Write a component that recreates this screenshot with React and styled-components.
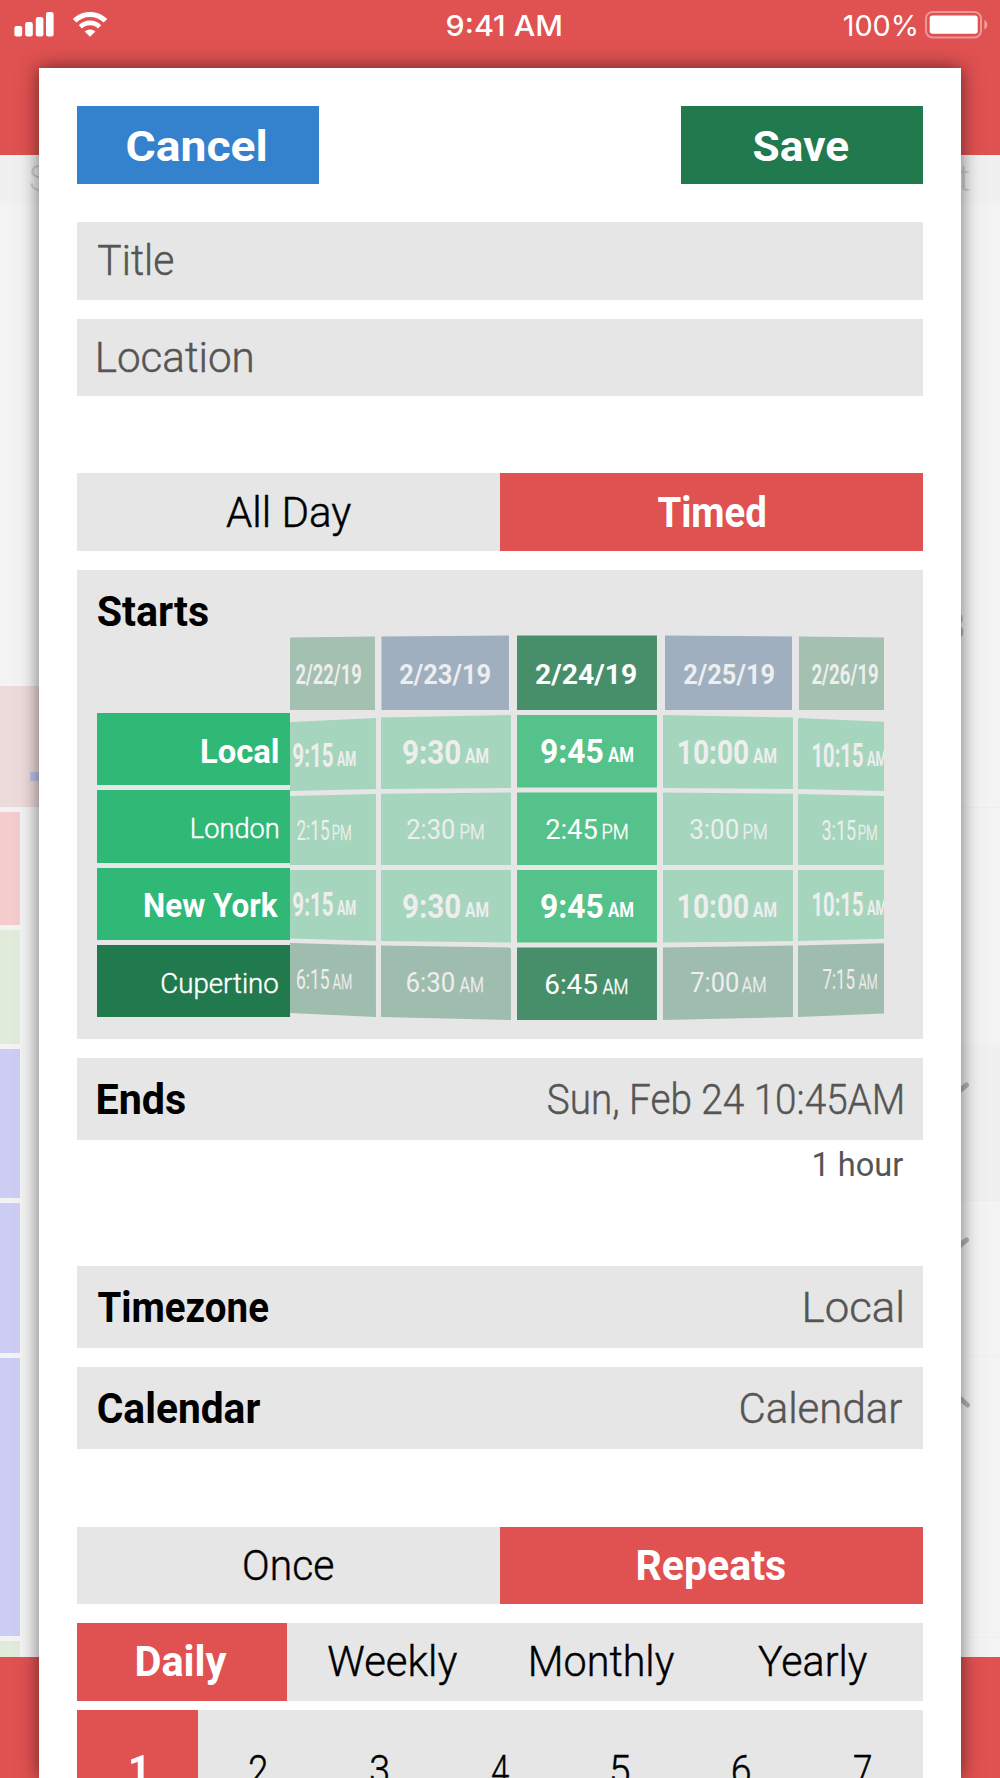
import React, { useLayoutEffect, useRef, useState } from "react";
import styled, { createGlobalStyle } from "styled-components";

const red = "#e05151";
const grey = "#e6e6e6";
const green = "#2fb876";
const darkGreen = "#207a4e";

const GlobalStyle = createGlobalStyle`
  * {
    box-sizing: border-box;
  }
  body {
    margin: 0;
    overflow: hidden;
    font-family: Roboto, "Liberation Sans", sans-serif;
    font-size: 42px;
    font-weight: 300;
  }
`;

const Screen = styled.div`
  position: relative;
  display: flex;
  flex-direction: column;
  width: 1000px;
  height: 1778px;
  overflow: hidden;
  background: #f3f3f3;
`;

/* status bar */

const Header = styled.header`
  height: 154.5px;
  flex: none;
  background: ${red};
`;

const StatusBar = styled.div`
  display: grid;
  grid-template-columns: 1fr auto 1fr;
  align-items: center;
  height: 51px;
  padding: 0 12px 0 14px;
  color: #fff;
  font-family: Inter, "Liberation Sans", sans-serif;
  font-size: 29px;
  font-weight: 500;
`;

const Clock = styled.div`
  padding-left: 6px;
`;

const StatusGroup = styled.div`
  display: flex;
  align-items: center;
  justify-content: ${(props) => (props.$end ? "flex-end" : "flex-start")};
  gap: ${(props) => (props.$end ? "9px" : "19px")};
  font-size: 28.5px;
  font-weight: 400;

  svg {
    display: block;
    margin-bottom: 2px;
  }
`;

/* calendar behind the sheet */

const WeekBar = styled.div`
  display: flex;
  justify-content: space-between;
  height: 48px;
  flex: none;
  padding: 0 30px 0 29px;
  background: #f0f0f0;
  color: #cfcfcf;
  font-size: 36px;
  line-height: 48px;
`;

const Days = styled.div`
  display: flex;
  flex: 1;
  min-height: 0;
`;

const EventColumn = styled.div`
  display: flex;
  flex-direction: column;
  gap: 5px;
  width: 50%;
  padding-top: 483px;
`;

const TodayBand = styled.div`
  display: flex;
  align-items: flex-end;
  height: 121px;
  flex: none;
  padding: 0 0 26px 30px;
  background: #eddada;
`;

const TodayMark = styled.span`
  width: 40px;
  height: 9px;
  background: #c3c4ea;
`;

const EventBlock = styled.div`
  width: 19.5px;
  height: ${(props) => props.$height}px;
  flex: none;
  background: ${(props) => props.$color};
`;

const DayColumn = styled.div`
  display: flex;
  flex-direction: column;
  width: 50%;
`;

const DayRow = styled.div`
  display: flex;
  justify-content: flex-end;
  height: ${(props) => props.$height}px;
  flex: none;
  padding: ${(props) => props.$top || 0}px ${(props) => props.$right || 30}px 0 0;
  border-bottom: 1px solid #eee;
  background: ${(props) => (props.$shaded ? "#f0f0f0" : "transparent")};
  color: #b8b8b8;
  font-size: 41px;
  font-weight: 700;
  line-height: 48px;
`;

const TabBar = styled.footer`
  height: 121px;
  flex: none;
  background: ${red};
`;

/* sheet */

const Sheet = styled.main`
  position: absolute;
  top: 67.7px;
  left: 38.7px;
  display: flex;
  flex-direction: column;
  width: 922.7px;
  height: 1710.3px;
  padding: 38.6px 38.6px 0;
  overflow: hidden;
  background: #fff;
  box-shadow: 0 0 18px rgba(0, 0, 0, 0.55);
`;

const Actions = styled.div`
  display: flex;
  justify-content: space-between;
  margin-bottom: 38.7px;
`;

const ActionButton = styled.button`
  display: flex;
  align-items: center;
  width: 241.7px;
  height: 77.3px;
  padding: 4px 0 0 ${(props) => props.$left}px;
  border: none;
  background: ${(props) => props.$color};
  color: #fff;
  font: inherit;
  font-weight: 700;
`;

const Field = styled.div`
  display: flex;
  align-items: center;
  justify-content: space-between;
  height: ${(props) => props.$height || 77.3}px;
  flex: none;
  margin-bottom: ${(props) => (props.$gap ?? 19.3)}px;
  padding: 0 20.5px;
  background: ${grey};
  color: #555;
`;

const FieldLabel = styled.span`
  color: #000;
  font-weight: 700;
`;

const Duration = styled.div`
  display: flex;
  align-items: center;
  justify-content: flex-end;
  height: 50px;
  flex: none;
  margin-bottom: 76px;
  padding-right: 20px;
  color: #555;
  font-size: 32.5px;
  font-weight: 400;
`;

const Segments = styled.div`
  display: flex;
  height: ${(props) => props.$height || 77.3}px;
  flex: none;
  margin-bottom: ${(props) => props.$gap ?? 19.3}px;
  background: ${grey};
`;

const Segment = styled.button`
  display: flex;
  align-items: center;
  justify-content: center;
  flex: ${(props) => (props.$width ? `0 0 ${props.$width}px` : 1)};
  padding: 0;
  border: none;
  background: ${(props) => (props.$active ? red : "transparent")};
  color: ${(props) => (props.$active ? "#fff" : "#000")};
  font: inherit;
  font-weight: ${(props) => (props.$active ? 700 : 300)};
`;

const StartsPanel = styled.section`
  height: 468.7px;
  flex: none;
  margin-bottom: 19.3px;
  padding: 16px 0 0 19.7px;
  background: ${grey};
`;

const StartsTitle = styled.div`
  display: flex;
  align-items: center;
  height: 49px;
  padding: 2px 0 0 1px;
  font-weight: 700;
`;

const Picker = styled.div`
  display: flex;
`;

const Zones = styled.div`
  display: flex;
  flex-direction: column;
  gap: 5px;
  width: 193px;
  padding-top: 78px;
`;

const Zone = styled.div`
  display: flex;
  align-items: center;
  justify-content: flex-end;
  height: 72.3px;
  padding: 4px 12px 0 0;
  background: ${(props) => (props.$dark ? darkGreen : green)};
  color: #fff;
  font-size: ${(props) => (props.$bold ? 33 : 28.5)}px;
  font-weight: ${(props) => (props.$bold ? 700 : 300)};
`;

const Wheel = styled.div`
  display: flex;
  width: 594px;
  height: 400px;
  overflow: hidden;
`;

const WheelColumn = styled.div`
  display: flex;
  flex-direction: column;
  gap: 5px;
  width: ${(props) => props.$width}px;
  flex: none;
  margin-right: ${(props) => props.$gap}px;
  color: ${(props) => (props.$center ? "#fff" : "#eee")};
`;

/* the wheel bends away from the centre, so each cell face is a quad */
const WheelCell = styled.div`
  position: relative;
  display: flex;
  align-items: center;
  height: ${(props) => (props.$head ? 75 : 72.5)}px;
  flex: none;
  padding-left: ${(props) => props.$left}px;
  padding-top: ${(props) => Math.max(0, props.$shift) * 2}px;
  padding-bottom: ${(props) => Math.max(0, -props.$shift) * 2}px;
  font-size: ${(props) => (props.$bold ? 33 : 28.5)}px;
  font-weight: ${(props) => (props.$bold ? 700 : 400)};
  ${(props) => props.$head && "font-size: 28.5px; font-weight: 700;"}

  &::before {
    content: "";
    position: absolute;
    inset: -8px ${(props) => props.$inset[1]}px -8px ${(props) => props.$inset[0]}px;
    background: ${(props) => props.$color};
    clip-path: polygon(
      0 ${(props) => 8 + props.$quad[0]}px,
      100% ${(props) => 8 + props.$quad[1]}px,
      100% calc(100% - 8px + ${(props) => props.$quad[3]}px),
      0 calc(100% - 8px + ${(props) => props.$quad[2]}px)
    );
  }
`;

const CellText = styled.span`
  position: relative;
  display: flex;
`;

const Meridiem = styled.span`
  position: relative;
  margin-left: ${(props) => props.$gap}px;
  padding-top: ${(props) => (props.$bold ? 8 : 6)}px;
  font-size: 19.5px;
  font-weight: ${(props) => (props.$bold ? 700 : 300)};
`;

const FitBox = styled.span`
  display: block;
  white-space: nowrap;
`;

const FitInner = styled.span`
  display: block;
  width: max-content;
  transform-origin: 0 50%;
  -webkit-text-stroke: ${(props) => (props.$light ? "0.45px currentColor" : "0")};
`;

/* condenses or widens the text so that its ink fills the given width */
const Fit = ({ width, children }) => {
  const ref = useRef(null);
  const [transform, setTransform] = useState("none");
  const [light, setLight] = useState(false);

  useLayoutEffect(() => {
    const css = getComputedStyle(ref.current);
    const ctx = document.createElement("canvas").getContext("2d");
    // measured at ten times the size, since the bounds are whole pixels
    const size = parseFloat(css.fontSize);
    ctx.font = `${css.fontWeight} ${size * 10}px ${css.fontFamily}`;
    const m = ctx.measureText(children);
    const left = m.actualBoundingBoxLeft / 10;
    const scale = width / (m.actualBoundingBoxRight / 10 + left);
    setTransform(`translateX(${left * scale}px) scaleX(${scale})`);
    setLight(css.fontWeight === "300");
  }, [width, children]);

  return (
    <FitBox style={{ width }}>
      <FitInner ref={ref} $light={light} style={{ transform }}>
        {children}
      </FitInner>
    </FitBox>
  );
};

const SignalIcon = () => (
  <svg width="40" height="25" viewBox="0 0 40 25" fill="#fff">
    <rect x="0.4" y="14" width="7.8" height="10.5" rx="2.2" />
    <rect x="11.2" y="10" width="7.6" height="14.5" rx="2.2" />
    <rect x="21.8" y="5" width="7.6" height="19.5" rx="2.2" />
    <rect x="32" y="0" width="7.6" height="24.5" rx="2.2" />
  </svg>
);

const WifiIcon = () => (
  <svg width="34" height="25" viewBox="0 0 34 25" fill="none">
    <path d="M1.6 8.8a21.8 21.8 0 0 1 30.8 0" stroke="#fff" strokeWidth="5" />
    <path d="M7.4 14.8a13.8 13.8 0 0 1 19.2 0" stroke="#fff" strokeWidth="4.6" />
    <path d="M11.6 19.6a8 8 0 0 1 10.8 0L17 24.8z" fill="#fff" />
  </svg>
);

const BatteryIcon = () => (
  <svg width="63" height="28" viewBox="0 0 63 28">
    <rect
      x="1"
      y="1"
      width="55"
      height="25.4"
      rx="6.5"
      fill="none"
      stroke="#fff"
      strokeOpacity="0.4"
      strokeWidth="2"
    />
    <rect x="4.7" y="4.4" width="48" height="18.4" rx="2.8" fill="#fff" />
    <path d="M59.4 9c3.8 1.6 3.8 7.8 0 9.4z" fill="#fff" fillOpacity="0.45" />
  </svg>
);

const Chevron = ({ flip }) => (
  <svg width="24" height="24" viewBox="0 0 24 24" fill="none">
    <path
      d={flip ? "M6 5L20.5 18" : "M6 18L20.5 6"}
      stroke="#b4b4b4"
      strokeWidth="5"
      strokeLinecap="round"
    />
  </svg>
);

const events = [
  { height: 113, color: "#f4cccd" },
  { height: 114, color: "#e1ebdc" },
  { height: 149.5, color: "#cdcdf3" },
  { height: 150, color: "#cdcdf3" },
  { height: 277.5, color: "#cdcdf3" },
  { height: 18, color: "#e1ebdc" },
];

const zones = [
  { name: "Local", width: 75.5, bold: true },
  { name: "London", width: 86 },
  { name: "New York", width: 133, bold: true },
  { name: "Cupertino", width: 116, dark: true },
];

const faded = "#a5d6bd";
const fadedDark = "#9fbdae";
const flat = [0, 0, 0, 0];

// cell: [text, text width, left, am/pm width, am/pm gap]
const columns = [
  {
    width: 86,
    gap: 5,
    inset: [0, 1],
    color: faded,
    dark: fadedDark,
    head: ["2/22/19", 65, 6, "#a4c0b1"],
    shifts: [4, 1.5, -1.5, -4],
    quads: [[2.5, 1.5, 0, 0], [7, 3, 3.5, 1.5], [3.5, 1.5, 0, 0], [0, 0, -4, -1.5], [-4.5, -2, -7, -3]],
    cells: [
      ["9:15", 40, 3, 18.5, 4],
      ["2:15", 32, 7, 17.5, 4.5],
      ["9:15", 40, 3, 18.5, 4],
      ["6:15", 32, 7, 18, 4.5],
    ],
  },
  {
    width: 130,
    gap: 6,
    inset: [0.5, 2],
    color: faded,
    dark: fadedDark,
    head: ["2/23/19", 90, 19, "#9fafc0"],
    shifts: [1.5, 0.5, 0, -1],
    quads: [[1.5, 0.5, 0, 0], [2.5, 0, 1.5, 0.5], [1.2, 0, 0, 0], [0, 0, -1.5, 0], [-2, 0, -3, 0]],
    cells: [
      ["9:30", 57, 22, 23, 5.5],
      ["2:30", 47, 26.5, 22, 6.5],
      ["9:30", 57, 22, 23, 5.5],
      ["6:30", 47, 26.5, 22.5, 6],
    ],
  },
  {
    width: 140,
    gap: 6,
    center: true,
    inset: [0, 0],
    color: "#54c28a",
    dark: "#478f6a",
    head: ["2/24/19", 100, 19.5, "#478f6a"],
    shifts: [0.7, 0.7, 0.5, 0.5],
    quads: [[0.5, 0.5, 0, 0], flat, flat, flat, flat],
    cells: [
      ["9:45", 62, 24, 25, 5.5],
      ["2:45", 51, 29, 24, 6],
      ["9:45", 62, 24, 25, 5.5],
      ["6:45", 51, 29, 24, 6],
    ],
  },
  {
    width: 130,
    gap: 5,
    inset: [2, 0.5],
    color: faded,
    dark: fadedDark,
    head: ["2/25/19", 90, 21, "#9fafc0"],
    shifts: [1.5, 0.5, 0, -1],
    quads: [[0.5, 1.5, 0, 0], [0, 2.5, 0.5, 1.5], [0, 1.2, 0, 0], [0, 0, 0, -1.5], [0, -2, 0, -3]],
    cells: [
      ["10:00", 69, 16, 23, 5.5],
      ["3:00", 48, 27.5, 22, 5.5],
      ["10:00", 69, 16, 23, 5.5],
      ["7:00", 47, 28, 23, 4],
    ],
  },
  {
    width: 94,
    gap: 0,
    inset: [1, 0],
    color: faded,
    dark: fadedDark,
    head: ["2/26/19", 66, 14, "#a4c0b1"],
    shifts: [4, 1.5, -1.5, -4],
    quads: [[1.5, 2.5, 0, 0], [3, 7, 1.5, 3.5], [1.5, 3.5, 0, 0], [0, 0, -1.5, -4], [-2, -4.5, -3, -7]],
    cells: [
      ["10:15", 50, 15, 19, 4],
      ["3:15", 33.5, 24, 17.5, 4],
      ["10:15", 50, 15, 19, 4],
      ["7:15", 31.5, 25, 17.5, 4.5],
    ],
  },
];

const TimeWheel = () => (
  <Wheel>
    {columns.map((col) => (
      <WheelColumn
        key={col.head[0]}
        $width={col.width}
        $gap={col.gap}
        $center={col.center}
      >
        <WheelCell
          $head
          $left={col.head[2]}
          $color={col.head[3]}
          $quad={col.quads[0]}
          $inset={col.inset}
          $shift={2}
        >
          <CellText>
            <Fit width={col.head[1]}>{col.head[0]}</Fit>
          </CellText>
        </WheelCell>
        {col.cells.map(([time, width, left, amWidth, amGap], i) => {
          const bold = i % 2 === 0;
          return (
            <WheelCell
              key={i}
              $bold={bold}
              $left={left}
              $color={i === 3 ? col.dark : col.color}
              $quad={col.quads[i + 1]}
              $inset={[0, 0]}
              $shift={col.shifts[i]}
            >
              <CellText>
                <Fit width={width}>{time}</Fit>
              </CellText>
              <Meridiem $gap={amGap} $bold={bold}>
                <Fit width={amWidth}>{i === 1 ? "PM" : "AM"}</Fit>
              </Meridiem>
            </WheelCell>
          );
        })}
      </WheelColumn>
    ))}
  </Wheel>
);

const Background = () => (
  <>
    <Header>
      <StatusBar>
        <StatusGroup>
          <SignalIcon />
          <WifiIcon />
        </StatusGroup>
        <Clock>
          <Fit width={114}>9:41 AM</Fit>
        </Clock>
        <StatusGroup $end>
          <Fit width={72}>100%</Fit>
          <BatteryIcon />
        </StatusGroup>
      </StatusBar>
    </Header>
    <WeekBar>
      <span>S</span>
      <span>t</span>
    </WeekBar>
    <Days>
      <EventColumn>
        <TodayBand>
          <TodayMark />
        </TodayBand>
        {events.map((event, i) => (
          <EventBlock key={i} $height={event.height} $color={event.color} />
        ))}
      </EventColumn>
      <DayColumn>
        <DayRow $height={605} $top={399} $right={35}>
          8
        </DayRow>
        <DayRow $height={238} />
        <DayRow $height={155} $top={33} $shaded>
          <Chevron />
        </DayRow>
        <DayRow $height={155} $top={33}>
          <Chevron />
        </DayRow>
        <DayRow $height={282} $top={31} $right={29}>
          <Chevron flip />
        </DayRow>
      </DayColumn>
    </Days>
    <TabBar />
  </>
);

const App = () => {
  const [timed, setTimed] = useState(true);
  const [repeats, setRepeats] = useState(true);
  const [period, setPeriod] = useState("Daily");
  const [interval, setInterval] = useState(1);

  const periods = [
    ["Daily", 90],
    ["Weekly", 129],
    ["Monthly", 143],
    ["Yearly", 109],
  ];

  return (
    <Screen>
      <GlobalStyle />
      <Background />
      <Sheet>
        <Actions>
          <ActionButton $color="#3481cd" $left={50}>
            <Fit width={138}>Cancel</Fit>
          </ActionButton>
          <ActionButton $color={darkGreen} $left={72.5}>
            <Fit width={94}>Save</Fit>
          </ActionButton>
        </Actions>

        <Field>
          <Fit width={75}>Title</Fit>
        </Field>
        <Field $gap={77.3}>
          <Fit width={154}>Location</Fit>
        </Field>

        <Segments>
          <Segment $active={!timed} onClick={() => setTimed(false)}>
            <Fit width={125}>All Day</Fit>
          </Segment>
          <Segment $active={timed} onClick={() => setTimed(true)}>
            <Fit width={107}>Timed</Fit>
          </Segment>
        </Segments>

        <StartsPanel>
          <StartsTitle>
            <Fit width={110}>Starts</Fit>
          </StartsTitle>
          <Picker>
            <Zones>
              {zones.map((zone) => (
                <Zone key={zone.name} $bold={zone.bold} $dark={zone.dark}>
                  <Fit width={zone.width}>{zone.name}</Fit>
                </Zone>
              ))}
            </Zones>
            <TimeWheel />
          </Picker>
        </StartsPanel>

        <Field $height={82} $gap={0}>
          <FieldLabel>
            <Fit width={87}>Ends</Fit>
          </FieldLabel>
          <Fit width={354}>Sun, Feb 24 10:45AM</Fit>
        </Field>
        <Duration>
          <Fit width={89}>1 hour</Fit>
        </Duration>

        <Field $height={82}>
          <FieldLabel>
            <Fit width={170}>Timezone</Fit>
          </FieldLabel>
          <Fit width={97}>Local</Fit>
        </Field>
        <Field $height={82} $gap={77.3}>
          <FieldLabel>
            <Fit width={162}>Calendar</Fit>
          </FieldLabel>
          <Fit width={161}>Calendar</Fit>
        </Field>

        <Segments>
          <Segment $active={!repeats} onClick={() => setRepeats(false)}>
            <Fit width={89}>Once</Fit>
          </Segment>
          <Segment $active={repeats} onClick={() => setRepeats(true)}>
            <Fit width={147}>Repeats</Fit>
          </Segment>
        </Segments>
        <Segments $gap={9.7}>
          {periods.map(([name, width]) => (
            <Segment
              key={name}
              $width={210}
              $active={period === name}
              onClick={() => setPeriod(name)}
            >
              <Fit width={width}>{name}</Fit>
            </Segment>
          ))}
        </Segments>
        <Segments $height={120.8}>
          {[1, 2, 3, 4, 5, 6, 7].map((n) => (
            <Segment
              key={n}
              $active={interval === n}
              onClick={() => setInterval(n)}
            >
              <Fit width={n === 1 ? 13 : 17}>{String(n)}</Fit>
            </Segment>
          ))}
        </Segments>
      </Sheet>
    </Screen>
  );
};

export default App;
